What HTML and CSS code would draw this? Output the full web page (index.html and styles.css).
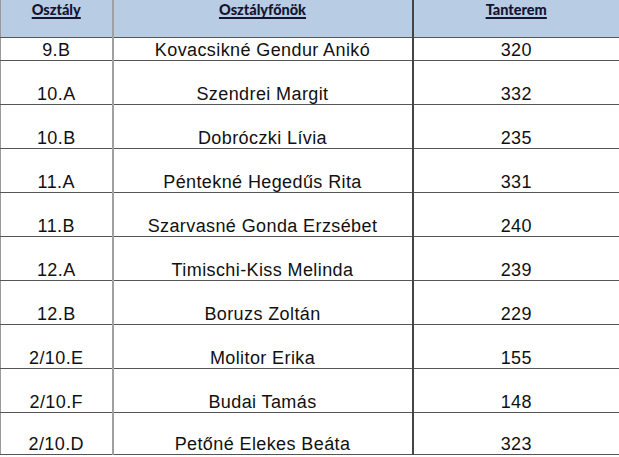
FILE: index.html
```html
<!DOCTYPE html>
<html lang="hu">
<head>
<meta charset="utf-8">
<title>Osztályfőnökök</title>
<link rel="stylesheet" href="styles.css">
</head>
<body>
<table class="classes">
  <colgroup>
    <col class="c1"><col class="c2"><col class="c3">
  </colgroup>
  <thead>
    <tr class="head">
      <th class="col1"><span>Osztály</span></th>
      <th class="col2"><span>Osztályfőnök</span></th>
      <th class="col3"><span>Tanterem</span></th>
    </tr>
  </thead>
  <tbody>
    <tr class="first"><td class="col1">9.B</td><td class="col2">Kovacsikné Gendur Anikó</td><td class="col3">320</td></tr>
    <tr><td class="col1">10.A</td><td class="col2">Szendrei Margit</td><td class="col3">332</td></tr>
    <tr><td class="col1">10.B</td><td class="col2">Dobróczki Lívia</td><td class="col3">235</td></tr>
    <tr><td class="col1">11.A</td><td class="col2">Péntekné Hegedűs Rita</td><td class="col3">331</td></tr>
    <tr><td class="col1">11.B</td><td class="col2">Szarvasné Gonda Erzsébet</td><td class="col3">240</td></tr>
    <tr><td class="col1">12.A</td><td class="col2">Timischi-Kiss Melinda</td><td class="col3">239</td></tr>
    <tr><td class="col1">12.B</td><td class="col2">Boruzs Zoltán</td><td class="col3">229</td></tr>
    <tr><td class="col1">2/10.E</td><td class="col2">Molitor Erika</td><td class="col3">155</td></tr>
    <tr><td class="col1">2/10.F</td><td class="col2">Budai Tamás</td><td class="col3">148</td></tr>
    <tr class="last"><td class="col1">2/10.D</td><td class="col2">Petőné Elekes Beáta</td><td class="col3">323</td></tr>
  </tbody>
</table>
</body>
</html>
```
FILE: styles.css
```css
html, body {
  margin: 0;
  padding: 0;
  background: #ffffff;
}
.classes {
  border-collapse: collapse;
  table-layout: fixed;
  width: 619px;
  font-family: "Liberation Sans", Arial, sans-serif;
}
.c1 { width: 112px; }
.c2 { width: 300px; }
.c3 { width: 207px; }
.classes th, .classes td {
  padding: 0;
  text-align: center;
  border-bottom: 1px solid #555555;
}
.head th {
  height: 37px;
  background: #b8cce4;
  vertical-align: top;
  font-family: Lato, "Open Sans", sans-serif;
  font-weight: 900;
  font-size: 14.5px;
  color: #141432;
  line-height: 17px;
  padding-top: 1px;
  box-sizing: border-box;
}
.head th span {
  text-decoration: underline;
  text-decoration-thickness: 1.5px;
  text-underline-offset: 2px;
}
.classes td {
  height: 44px;
  vertical-align: bottom;
  font-size: 18px;
  letter-spacing: 0.4px;
  line-height: 19px;
  color: #111111;
  padding-bottom: 0;
  box-sizing: border-box;
}
.classes tr.first td { height: 23px; }
.classes tr.last td { height: 42px; }
.col1 {
  border-left: 1px solid #9a9a9a;
  border-right: 2px solid #a0a0a0;
}
.col2 { border-right: 2px solid #444444; }
.col3 { border-right: 1px solid #777777; }
```
